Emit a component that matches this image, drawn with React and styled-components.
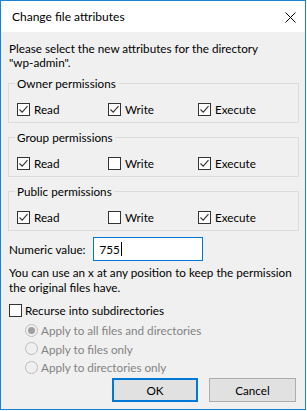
import React, { useState } from "react";
import styled, { createGlobalStyle } from "styled-components";

const GlobalStyle = createGlobalStyle`
  html, body {
    margin: 0;
    padding: 0;
    background: #ffffff;
  }
  body {
    font-family: Lato, "Noto Sans", sans-serif;
    font-size: 11.7px;
    color: #000;
  }
`;

const groups = [
  { title: "Owner permissions", values: [true, true, true] },
  { title: "Group permissions", values: [true, false, true] },
  { title: "Public permissions", values: [true, false, true] },
];

const names = ["Read", "Write", "Execute"];

const applyOptions = [
  "Apply to all files and directories",
  "Apply to files only",
  "Apply to directories only",
];

function Check({ checked }) {
  return (
    <Box>
      {checked && (
        <svg width="11" height="11" viewBox="0 0 11 11">
          <path d="M1.5 5.5 L4.2 8.2 L9.5 2.2" fill="none" stroke="#333" strokeWidth="1.1" />
        </svg>
      )}
    </Box>
  );
}

function App() {
  const [value] = useState("755");

  return (
    <>
      <GlobalStyle />
      <Window>
        <TitleBar>
          <Title>Change file attributes</Title>
          <CloseButton>
            <svg width="11" height="11" viewBox="0 0 11 11">
              <path d="M0.5 0.5 L10.5 10.5 M10.5 0.5 L0.5 10.5" stroke="#000" strokeWidth="1" />
            </svg>
          </CloseButton>
        </TitleBar>
        <Body>
          <Intro>
            Please select the new attributes for the directory
            <br />"wp-admin".
          </Intro>

          {groups.map((g) => (
            <Group key={g.title}>
              <Legend>{g.title}</Legend>
              <CheckRow>
                {names.map((n, i) => (
                  <CheckItem key={n}>
                    <Check checked={g.values[i]} />
                    <span>{n}</span>
                  </CheckItem>
                ))}
              </CheckRow>
            </Group>
          ))}

          <NumericRow>
            <span>Numeric value:</span>
            <NumericInput>
              {value}
              <Caret />
            </NumericInput>
          </NumericRow>

          <Help>
            You can use an x at any position to keep the permission
            <br />
            the original files have.
          </Help>

          <RecurseRow>
            <Check checked={false} />
            <span>Recurse into subdirectories</span>
          </RecurseRow>

          <RadioList>
            {applyOptions.map((opt, i) => (
              <RadioRow key={opt}>
                <Radio selected={i === 0} />
                <span>{opt}</span>
              </RadioRow>
            ))}
          </RadioList>

          <Buttons>
            <Button $primary>OK</Button>
            <Button>Cancel</Button>
          </Buttons>
        </Body>
      </Window>
    </>
  );
}

export default App;

const Window = styled.div`
  width: 306px;
  height: 410px;
  box-sizing: border-box;
  border: 1px solid #1883d7;
  display: flex;
  flex-direction: column;
  background: #f0f0f0;
  overflow: hidden;
`;

const TitleBar = styled.div`
  height: 31px;
  flex-shrink: 0;
  background: #fff;
  display: flex;
  align-items: center;
  justify-content: space-between;
  padding: 0 9px 0 11px;
`;

const Title = styled.div`
  font-size: 12px;
  line-height: 14px;
  padding-top: 1px;
`;

const CloseButton = styled.div`
  width: 11px;
  height: 11px;
  display: flex;
  margin-top: 1px;
`;

const Body = styled.div`
  flex: 1;
  display: flex;
  flex-direction: column;
  padding: 9px 6px 0 7px;
  white-space: nowrap;
`;

const Intro = styled.div`
  line-height: 14px;
  margin-bottom: 7px;
  padding-left: 1px;
`;

const Group = styled.fieldset`
  margin: 0 0 7px 0;
  padding: 12px 8px 6px 8px;
  border: 1px solid #dcdcdc;
  min-width: 0;
  flex-shrink: 0;
`;

const Legend = styled.legend`
  padding: 0 2px;
  margin-left: -2px;
  line-height: 14px;
`;

const CheckRow = styled.div`
  display: grid;
  grid-template-columns: 91px 90px auto;
`;

const CheckItem = styled.label`
  display: flex;
  align-items: center;
  gap: 4px;
  height: 14px;
  line-height: 14px;
`;

const Box = styled.span`
  width: 13px;
  height: 13px;
  box-sizing: border-box;
  border: 1px solid #333;
  background: #fff;
  display: flex;
  align-items: center;
  justify-content: center;
  flex-shrink: 0;
`;

const NumericRow = styled.div`
  display: flex;
  align-items: center;
  gap: 7px;
  margin-top: -1px;
  padding-left: 1px;
`;

const NumericInput = styled.div`
  width: 110px;
  height: 24px;
  box-sizing: border-box;
  border: 1px solid #0078d7;
  background: #fff;
  display: flex;
  align-items: center;
  padding-left: 6px;
  line-height: 14px;
`;

const Caret = styled.span`
  width: 1px;
  height: 14px;
  background: #000;
  margin-left: 1px;
`;

const Help = styled.div`
  line-height: 15px;
  margin-top: 4px;
  padding-left: 1px;
`;

const RecurseRow = styled.label`
  display: flex;
  align-items: center;
  gap: 3px;
  margin-top: 8px;
  height: 14px;
  padding-left: 1px;
`;

const RadioList = styled.div`
  display: flex;
  flex-direction: column;
  margin-top: 4px;
  padding-left: 17px;
`;

const RadioRow = styled.label`
  display: flex;
  align-items: center;
  gap: 3px;
  height: 18.5px;
  color: #838383;
`;

const Radio = styled.span`
  width: 13px;
  height: 13px;
  box-sizing: border-box;
  border-radius: 50%;
  border: 1px solid #bcbcbc;
  background: #f0f0f0;
  display: flex;
  align-items: center;
  justify-content: center;
  flex-shrink: 0;
  &::after {
    content: "";
    width: 7px;
    height: 7px;
    border-radius: 50%;
    background: ${(p) => (p.selected ? "#a0a0a0" : "transparent")};
  }
`;

const Buttons = styled.div`
  display: flex;
  justify-content: flex-end;
  gap: 11px;
  margin-top: auto;
  margin-bottom: 7px;
  padding-right: 3px;
`;

const Button = styled.div`
  width: ${(p) => (p.$primary ? "86px" : "87px")};
  height: 24px;
  box-sizing: border-box;
  border: ${(p) => (p.$primary ? "2px solid #0078d7" : "1px solid #adadad")};
  background: #e1e1e1;
  display: flex;
  align-items: center;
  justify-content: center;
`;
